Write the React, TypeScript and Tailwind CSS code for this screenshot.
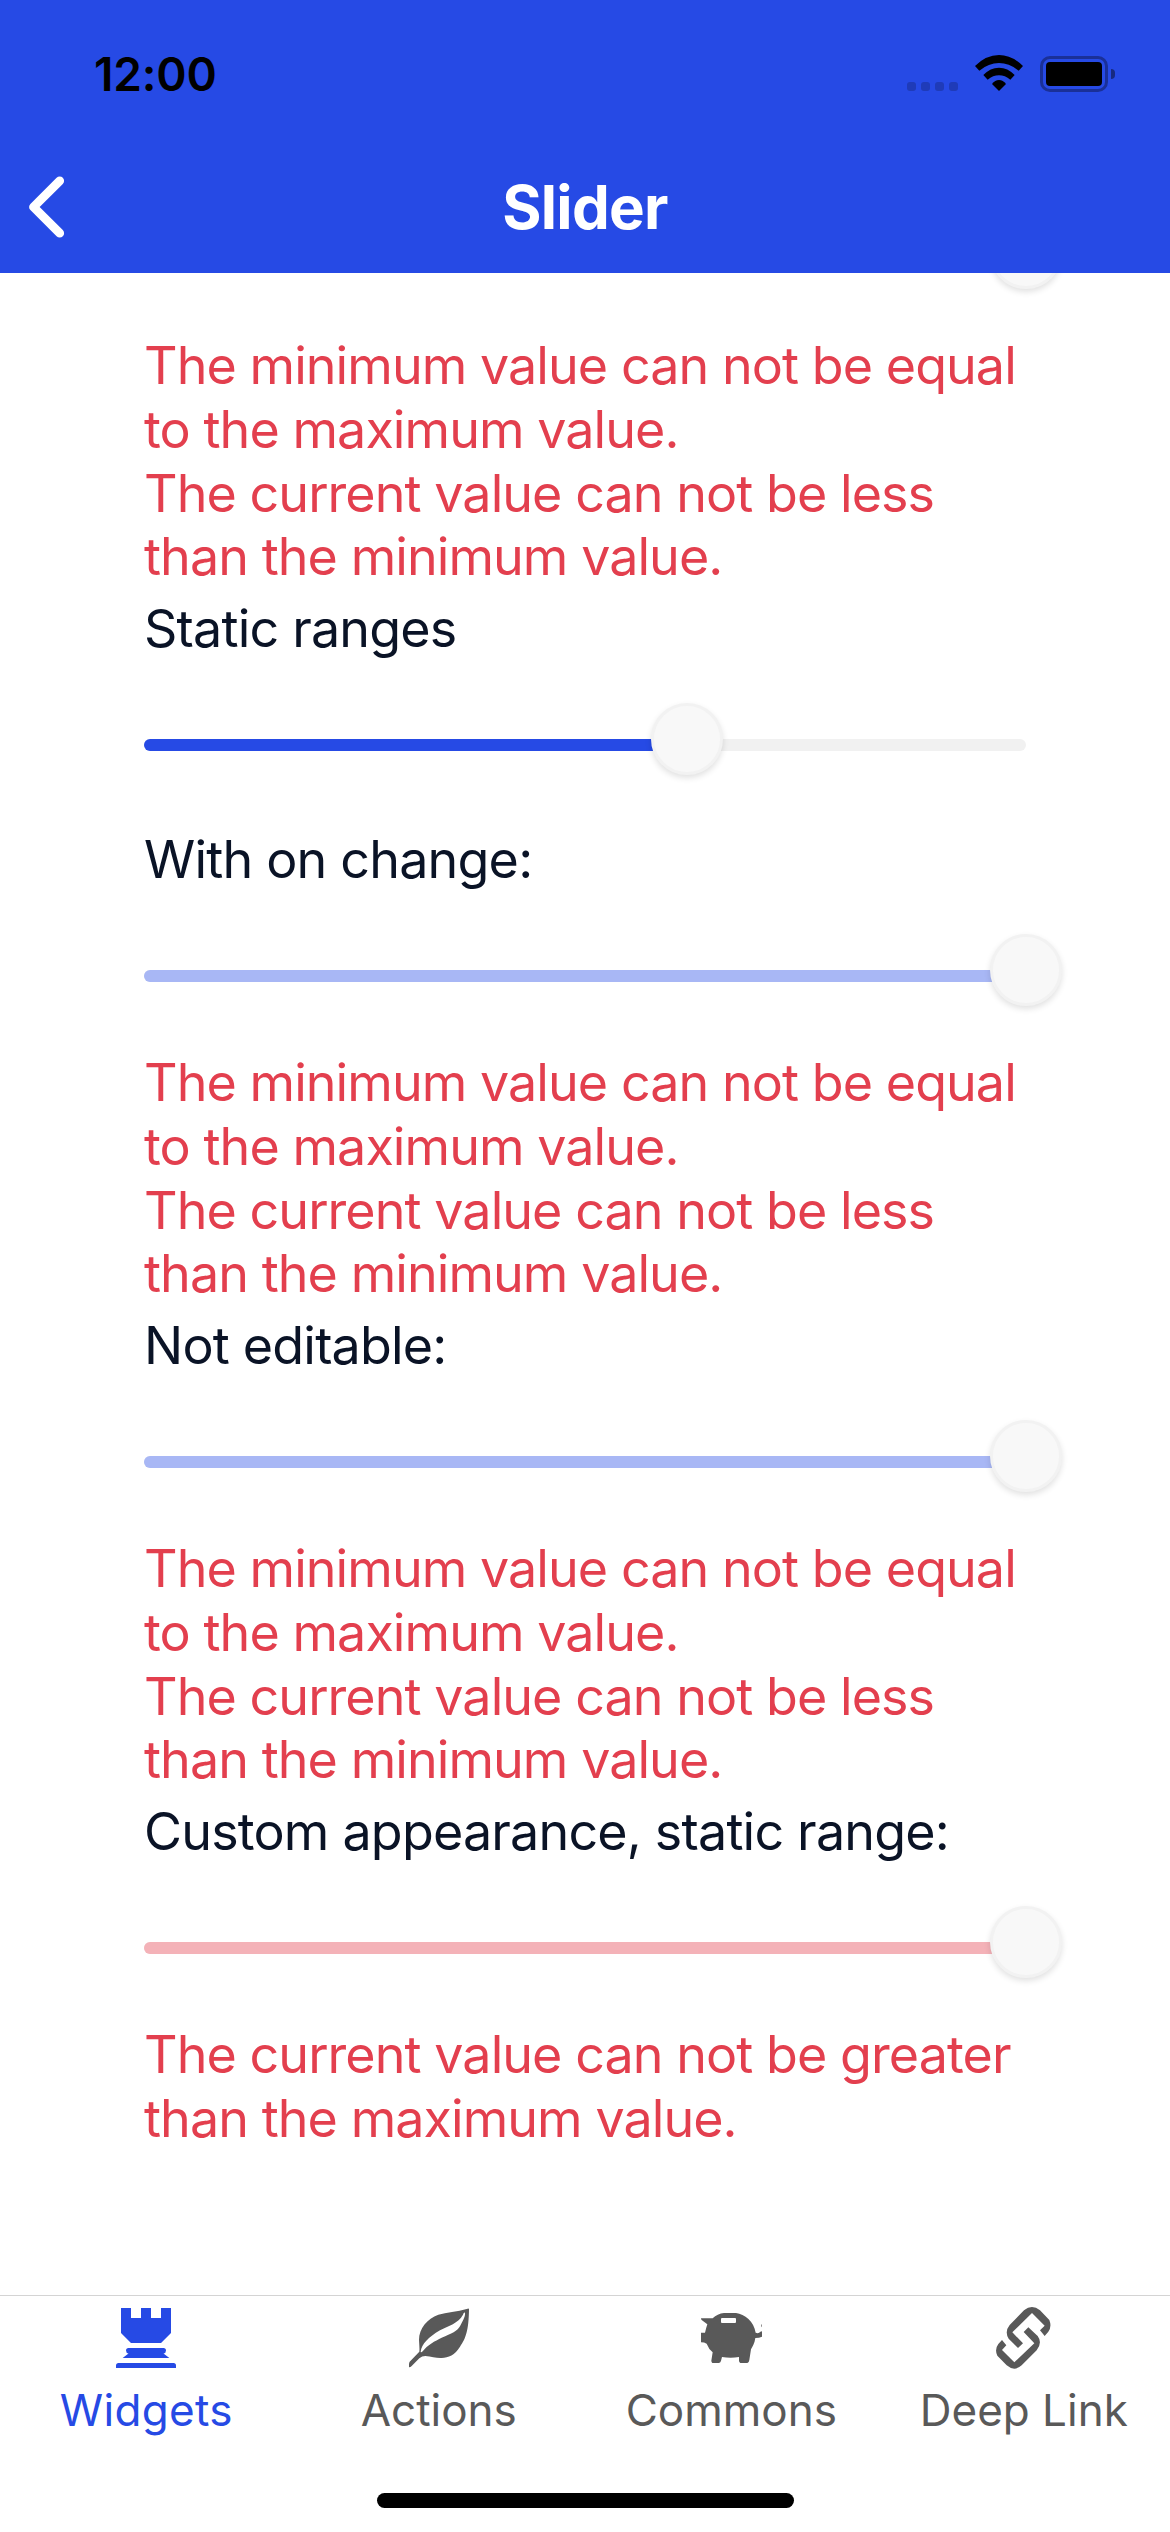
import type { ReactNode } from 'react';

type Tone = 'active' | 'disabled' | 'danger';

const fillTone: Record<Tone, string> = {
  active: 'bg-[#264ae5]',
  disabled: 'bg-[#a8b7f5]',
  danger: 'bg-[#f4b2b8]',
};

const MIN_EQUALS_MAX = ['The minimum value can not be equal', 'to the maximum value.'];
const BELOW_MIN = ['The current value can not be less', 'than the minimum value.'];
const ABOVE_MAX = ['The current value can not be greater', 'than the maximum value.'];

function StatusBar() {
  return (
    <div className="flex h-[141px] items-start justify-between pl-[94px] pr-[55px]">
      <span className="mt-[46px] text-[46px] leading-[56px] font-semibold tracking-[-0.15px] text-black">12:00</span>
      <div className="mt-[55px] flex items-start">
        <div className="mt-[27px] flex gap-[5px]">
          {[0, 1, 2, 3].map((dot) => (
            <span key={dot} className="size-[9px] rounded-[3px] bg-[#1f3bb8]" />
          ))}
        </div>
        <svg className="ml-[17px] h-[36px] w-[48px]" viewBox="345 105 144 108" fill="#000">
          <path d="M345 138 Q378 105 417 105 Q456 105 489 138 L476 152 Q448 129 417 129 Q386 129 358 152 Z" />
          <path d="M370 165 Q391 143 417 143 Q443 143 464 165 L451 179 Q435 166 417 166 Q399 166 383 179 Z" />
          <path d="M396 192 Q405 180 417 180 Q429 180 438 192 L417 213 Z" />
        </svg>
        <div className="mt-px ml-[17px] flex items-center">
          <div className="h-[36px] w-[68px] rounded-[10px] border-[3px] border-[#1a3098] p-[3px]">
            <div className="h-full w-full rounded-[4px] bg-black" />
          </div>
          <div className="ml-[3px] h-[10px] w-[4px] rounded-r-full bg-[#172a80]" />
        </div>
      </div>
    </div>
  );
}

function Header() {
  return (
    <header className="h-[273px] shrink-0 bg-[#264ae5]">
      <StatusBar />
      <div className="grid h-[132px] grid-cols-[200px_1fr_200px] items-center">
        <svg className="ml-[29px] h-[62px] w-[36px]" viewBox="0 0 36 62" fill="none" stroke="#fff" strokeWidth="8.8" strokeLinecap="round" strokeLinejoin="round">
          <path d="M30.7 4.8 L4.5 31 L30.7 57.2" />
        </svg>
        <h1 className="text-center text-[60px] leading-[72px] font-bold tracking-[-0.7px] text-white">Slider</h1>
      </div>
    </header>
  );
}

function Slider({ value, tone }: { value: number; tone: Tone }) {
  return (
    <div className="h-[159px] pt-[78px]">
      <div className="relative h-[12px] rounded-full bg-[#f1f1f1]">
        <div className={`h-full rounded-full ${fillTone[tone]}`} style={{ width: `${value}%` }} />
        <div
          className="absolute -top-[36px] size-[72px] -translate-x-1/2 rounded-full border-[3px] border-[#f2f2f2] bg-[#f8f8f8] shadow-[0_3px_6px_rgba(0,0,0,0.12)]"
          style={{ left: `${value}%` }}
        />
      </div>
    </div>
  );
}

function Label({ children }: { children: ReactNode }) {
  return <p className="mt-[8px] h-[64px] text-[52px] leading-[64px] tracking-[-0.8px] whitespace-nowrap text-[#0a1326]">{children}</p>;
}

function Errors({ lines }: { lines: string[] }) {
  return (
    <div className="text-[52px] leading-[63.75px] tracking-[-0.93px] text-[#e33f4e]">
      {lines.map((line) => (
        <p key={line} className="whitespace-nowrap">{line}</p>
      ))}
    </div>
  );
}

const tabs = [
  {
    label: 'Widgets',
    color: 'text-[#264ae5] tracking-[0.3px]',
    icon: (
      <svg className="size-[60px]" viewBox="0 0 12 12" fill="currentColor">
        <path d="M1 0H3V2H5V0H7V2H9V0H11V5L9 7H3L1 5Z" />
        <path d="M2.5 8H9.5Q10 8 10 8.5Q10 9 9.5 9.1L10.67 10H1.33L2.5 9.1Q2 9 2 8.5Q2 8 2.5 8Z" />
        <path d="M0 12V11.5Q0 11 .5 11H11.5Q12 11 12 11.5V12Z" />
      </svg>
    ),
  },
  {
    label: 'Actions',
    color: 'text-[#595959]',
    icon: (
      <svg className="size-[60px]" viewBox="207 84 180 180" fill="currentColor">
        <path
          fillRule="evenodd"
          d="M383 86 C350 95 320 97 295 104 C262 116 237 145 237 180 C238 198 239 208 238 215 L209 245 Q206 250 207 262 Q212 262 215 258 L238 235 Q246 228 256 228 C275 230 290 235 305 234 C325 233 345 225 360 200 C378 175 386 150 387 88 Q387 85 383 86Z M375 98 C372 97 371 100 369 104 C355 130 325 138 300 151 C265 172 245 192 242 215 Q243 219 248 214 C262 195 285 183 305 173 C335 160 352 155 362 135 C372 115 376 108 375 98Z"
        />
      </svg>
    ),
  },
  {
    label: 'Commons',
    color: 'text-[#595959]',
    icon: (
      <svg className="h-[60px] w-[61px]" viewBox="303 84 183 180" fill="currentColor">
        <path
          fillRule="evenodd"
          d="M303 115H338Q352 101 372 99H408C434 102 462 125 467 158Q476 162 481 155L486 154V170Q478 174 466 174C464 190 457 200 453 208L448 240Q447 248 442 249H421Q417 246 417 242V231Q392 235 366 231L363 242Q362 248 357 249H337Q334 246 334 242L338 217Q326 207 320 191Q313 187 303 187V158H315Q318 145 322 133L305 120Q303 118 303 115Z M366 114Q363 114 363 117V126Q363 129 366 129H405Q408 129 408 126V117Q408 114 405 114Z"
        />
        <path d="M484 135L486 132V142L484 139Z" />
      </svg>
    ),
  },
  {
    label: 'Deep Link',
    color: 'text-[#595959]',
    icon: (
      <svg className="h-[62px] w-[55px]" viewBox="290 81 165 186" fill="currentColor">
        <path d="M436 168L447 155Q458 140 450 120L422 91Q398 71 374 91L331 135Q315 155 328 176L356 204L371 190L339 157L398 99L436 137L422 151Z" />
        <path d="M308 180L297 192Q285 208 294 227L322 256Q345 276 367 256L412 211Q430 188 415 168L387 142L373 156L405 190L345 247L308 210L321 196Z" />
      </svg>
    ),
  },
];

function TabBar() {
  return (
    <nav className="grid h-[237px] shrink-0 grid-cols-4 content-start border-t border-[#d4d4d4] bg-white">
      {tabs.map((tab) => (
        <div key={tab.label} className={`flex flex-col items-center ${tab.color}`}>
          <div className="mt-[11px] flex h-[62px] items-center">{tab.icon}</div>
          <span className="mt-[14px] text-[44px] leading-[54px] whitespace-nowrap">{tab.label}</span>
        </div>
      ))}
      <div className="col-span-4 mt-[56px] h-[15px] w-[417px] justify-self-center rounded-full bg-black" />
    </nav>
  );
}

export default function App() {
  return (
    <div className="flex h-[2532px] w-[1170px] flex-col overflow-hidden bg-white font-['Inter',sans-serif]">
      <Header />
      <main className="min-h-0 flex-1 overflow-hidden px-[144px]">
        <div className="-mt-[98px]">
          <Slider value={100} tone="disabled" />
          <Errors lines={[...MIN_EQUALS_MAX, ...BELOW_MIN]} />
          <Label>Static ranges</Label>
          <Slider value={61.6} tone="active" />
          <Label>With on change:</Label>
          <Slider value={100} tone="disabled" />
          <Errors lines={[...MIN_EQUALS_MAX, ...BELOW_MIN]} />
          <Label>Not editable:</Label>
          <Slider value={100} tone="disabled" />
          <Errors lines={[...MIN_EQUALS_MAX, ...BELOW_MIN]} />
          <Label>Custom appearance, static range:</Label>
          <Slider value={100} tone="danger" />
          <Errors lines={ABOVE_MAX} />
        </div>
      </main>
      <TabBar />
    </div>
  );
}
